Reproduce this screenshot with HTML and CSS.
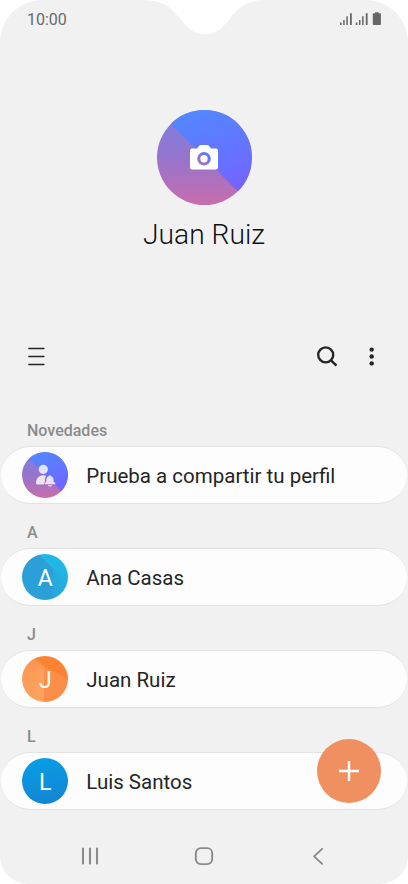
FILE: index.html
```html
<!DOCTYPE html>
<html lang="es">
<head>
<meta charset="utf-8">
<meta name="viewport" content="width=device-width, initial-scale=1">
<title>Contactos</title>
<link rel="stylesheet" href="styles.css">
</head>
<body>
<div class="phone">
  <svg class="notch" viewBox="0 0 124 35" aria-hidden="true"><path d="M0 0C18 0 27 5 36 16C45 27 50 34 63 34C76 34 81 27 90 16C99 5 107 0 124 0Z" fill="#fff"/></svg>
  <header class="status">
    <span class="clock">10:00</span>
    <svg class="status-icons" width="43" height="14" viewBox="0 0 43 14" fill="#666">
      <path d="M0 10.5h1.6V13H0zM3.2 8h1.5v5H3.2zM6.3 4.2h1.5V13H6.3zM10 1.3h1.8V13H10zM15.8 10.5h1.6V13h-1.6zM19 8h1.5v5H19zM22.1 4.2h1.5V13h-1.5zM25.8 1.3h1.8V13h-1.8z"/>
      <path d="M32.8 2q0-.7.7-.7h1.6V.2h3.5v1.1h1.6q.7 0 .7.7v10q0 1-1 1h-6.1q-1 0-1-1z"/>
    </svg>
  </header>
  <section class="profile">
    <div class="photo">
      <svg width="30" height="27" viewBox="0 0 30 27"><path fill="#fff" fill-rule="evenodd" d="M3 4.500h5L10 2q.7-.9 1.800-.9h6.400q1.100 0 1.800.9l2 2.500h5q2 0 2 2v17q0 2-2 2H3q-2 0-2-2v-17q0-2 2-2zM15 8a6.800 6.800 0 1 0 0 13.600A6.800 6.800 0 0 0 15 8zm0 3.100a3.700 3.700 0 1 1 0 7.400 3.700 3.700 0 0 1 0-7.400z"/></svg>
    </div>
    <h1>Juan Ruiz</h1>
  </section>
  <nav class="toolbar">
    <svg class="menu" width="18" height="20" viewBox="0 0 18 20" fill="none" stroke="#252525" stroke-width="1.5" stroke-linecap="round"><path d="M1.900 1.500h15M1.900 9.400h15M1.900 17.400h15"/></svg>
    <svg class="search" width="22" height="22" viewBox="0 0 22 22" fill="none" stroke="#252525" stroke-width="2.4"><circle cx="9.700" cy="8.900" r="7.500"/><path d="M15 14.300l5.500 5.300"/></svg>
    <svg class="more" width="6" height="20" viewBox="0 0 6 20" fill="#252525"><circle cx="2.700" cy="2.600" r="2.200"/><circle cx="2.700" cy="9.500" r="2.200"/><circle cx="2.700" cy="16.400" r="2.200"/></svg>
  </nav>
  <main>
    <h2>Novedades</h2>
    <div class="card">
      <span class="avatar share"><svg width="45" height="45" viewBox="0 0 45 45" fill="#fff" fill-opacity=".8"><circle cx="20.300" cy="16.300" r="4.600"/><path d="M13 30.200c0-5.200 3.300-8 7.500-8 1 0 1.900.2 2.700.6-.9 1.200-1.300 2.500-1.300 4.100v1.600l-.9 2.900h-6.700q-1.300 0-1.300-1.200z"/><path d="M22 30.300l1.400-1.900V27c0-2.200 1.200-3.600 2.900-4v-.8h1.400v.8c1.700.4 2.900 1.800 2.900 4v1.400l1.800 1.900v1H22zM25 32.200h4c-.3 1-1.100 1.400-2 1.400s-1.700-.4-2-1.400z"/></svg></span>
      <span class="name">Prueba a compartir tu perfil</span>
    </div>
    <h2>A</h2>
    <div class="card"><span class="avatar cyan">A</span><span class="name">Ana Casas</span></div>
    <h2>J</h2>
    <div class="card"><span class="avatar orange">J</span><span class="name">Juan Ruiz</span></div>
    <h2>L</h2>
    <div class="card"><span class="avatar blue">L</span><span class="name">Luis Santos</span></div>
  </main>
  <div class="fab"><svg width="22" height="22" viewBox="0 0 22 22" stroke="#fff" stroke-width="2.4"><path d="M1 11h20M11 1v20"/></svg></div>
  <footer class="system-nav">
    <svg width="20" height="20" viewBox="0 0 20 20" fill="none" stroke="#8a8a8a" stroke-width="2.1" stroke-linecap="round"><path d="M3 2.600v15M10 2.600v15M17 2.600v15"/></svg>
    <svg width="20" height="20" viewBox="0 0 20 20" fill="none" stroke="#8a8a8a" stroke-width="1.9"><rect x="1.800" y="2.100" width="16.400" height="16" rx="5"/></svg>
    <svg width="20" height="20" viewBox="0 0 20 20" fill="none" stroke="#8a8a8a" stroke-width="1.9" stroke-linecap="round" stroke-linejoin="round"><path d="M14.100 2.900L6.100 10.400L14.100 17.900"/></svg>
  </footer>
</div>
</body>
</html>
```
FILE: styles.css
```css
* { box-sizing: border-box; }

body {
  margin: 0;
  background: #fff;
  color: #252525;
  font-family: Roboto, sans-serif;
}

.phone {
  position: relative;
  width: 408px;
  height: 884px;
  padding: 0 1px;
  display: flex;
  flex-direction: column;
  overflow: hidden;
  background: #f1f1f1;
  border-radius: 42px 42px 28px 28px;
}

.notch {
  position: absolute;
  top: 0;
  left: 142px;
  width: 124px;
  height: 35px;
}

.status {
  height: 38px;
  padding: 0 26px;
  display: flex;
  align-items: center;
  justify-content: space-between;
}

.clock {
  padding-top: 1px;
  color: #6a6a6a;
  font-size: 16px;
  line-height: 20px;
}

.status-icons {
  margin-right: -2px;
}

.profile {
  height: 294px;
  padding-top: 72px;
  display: flex;
  flex-direction: column;
  align-items: center;
}

.photo {
  width: 95px;
  height: 95px;
  display: grid;
  place-items: center;
  border-radius: 50%;
}

.photo,
.share {
  background: linear-gradient(#7e7ee4, #9575cd 50%, #c86dac);
}

.photo::before,
.share::before {
  content: "";
  grid-area: 1 / 1;
  width: 100%;
  height: 100%;
  border-radius: 50%;
  background: linear-gradient(160deg, #4f8aff 5%, #6474ff 50%, #7661ff 90%);
  clip-path: polygon(0 0, 100% 0, 100% 100%);
}

.photo svg,
.share svg {
  grid-area: 1 / 1;
  z-index: 1;
}

h1 {
  margin: 12px 0 0;
  color: #111;
  font-size: 28.2px;
  font-weight: 300;
  line-height: 36px;
}

.toolbar {
  height: 48px;
  padding: 1px 32px 0 26px;
  display: flex;
  align-items: center;
}

.search { margin-left: auto; }
.more { margin-left: 31px; }

main {
  padding-top: 35px;
}

h2 {
  height: 31px;
  margin: 0 0 0 26px;
  color: #8b8b8b;
  font-size: 16px;
  font-weight: 500;
  line-height: 32px;
}

.card {
  height: 58px;
  margin-bottom: 13px;
  padding-left: 21.3px;
  display: flex;
  align-items: center;
  border: 1px solid #e3e3e3;
  border-width: 1px 0;
  border-radius: 29px;
  background: #fdfdfd;
}

.avatar {
  width: 46px;
  height: 46px;
  display: grid;
  place-items: center;
  border-radius: 50%;
  color: #fff;
  font-size: 23px;
  line-height: 50px;
  overflow: hidden;
}

.cyan { background: conic-gradient(from 0deg at 68% 33%, #21b7e5 0 90deg, #25a9dd 180deg, #2ba0d8 180deg 315deg, #21b7e5 315deg); }
.orange { background: conic-gradient(from 0deg at 48% 22%, #fd8333 0 120deg, #fb8e48 120deg 180deg, #fda360 180deg, #fb924c 310deg, #fd8333 310deg); }
.blue { background: linear-gradient(165deg, #06a0e8, #1682d0); }

.name {
  margin-left: 18px;
  padding-top: 2px;
  font-size: 20.5px;
  line-height: 28px;
}

.fab {
  position: absolute;
  top: 739px;
  left: 317px;
  width: 64px;
  height: 64px;
  display: grid;
  place-items: center;
  border-radius: 50%;
  background: #f09060;
}

.system-nav {
  height: 56px;
  margin-top: auto;
  padding: 0 79px;
  display: flex;
  align-items: center;
  justify-content: space-between;
}
```
